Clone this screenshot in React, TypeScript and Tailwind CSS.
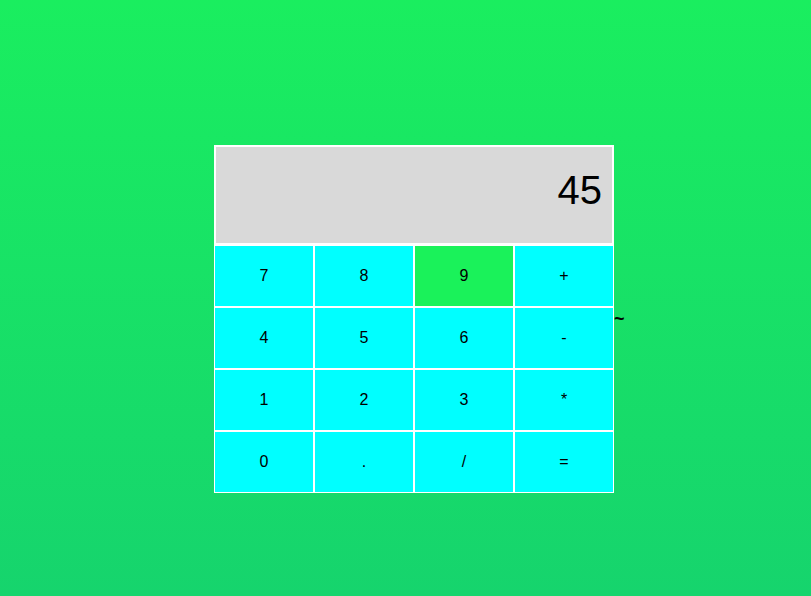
const keys = ['7', '8', '9', '+', '4', '5', '6', '-', '1', '2', '3', '*', '0', '.', '/', '='];

export default function App() {
  return (
    <div
      className="min-h-[596px] w-full bg-gradient-to-b from-[#1aee5f] to-[#16d46d] pt-[145px] pl-[214px]"
      style={{ fontFamily: '"Liberation Sans", Arial, sans-serif' }}
    >
      <div className="flex items-center">
        <div className="w-[400px]">
          <div className="h-[100px] border-2 border-white bg-[#d9d9d9] pt-[23px] pr-[10px] text-right text-[40px] leading-none text-black">
            45
          </div>
          <div className="grid grid-cols-4">
            {keys.map((k) => (
              <button
                key={k}
                className={`flex h-[62px] items-center justify-center border border-white text-base text-black ${
                  k === '9' ? 'bg-[#1af25a]' : 'bg-[#00ffff]'
                }`}
              >
                {k}
              </button>
            ))}
          </div>
        </div>
        <span className="text-[18px] font-bold text-black">~</span>
      </div>
    </div>
  );
}
